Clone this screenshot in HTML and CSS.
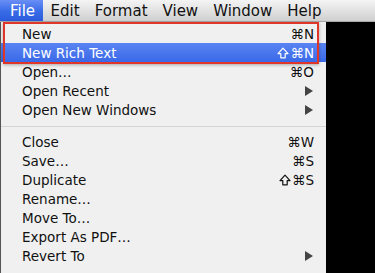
FILE: index.html
```html
<!DOCTYPE html>
<html lang="en">
<head>
    <meta charset="UTF-8">
    <title>File menu</title>
    <link rel="stylesheet" href="styles.css">
</head>
<body>
    <div class="menubar">
        <span class="menubar-item active">File</span>
        <span class="menubar-item">Edit</span>
        <span class="menubar-item">Format</span>
        <span class="menubar-item">View</span>
        <span class="menubar-item">Window</span>
        <span class="menubar-item">Help</span>
    </div>

    <div class="menu">
        <div class="menu-item"><span>New</span><span class="key">⌘N</span></div>
        <div class="menu-item selected">
            <span>New Rich Text</span>
            <span class="key"><svg class="shift" viewBox="0 0 12 12"><path d="M6 1.2 L11 6.6 H8.2 V10.8 H3.8 V6.6 H1 Z"/></svg>⌘N</span>
        </div>
        <div class="menu-item"><span>Open…</span><span class="key">⌘O</span></div>
        <div class="menu-item"><span>Open Recent</span><span class="arrow"></span></div>
        <div class="menu-item"><span>Open New Windows</span><span class="arrow"></span></div>
        <div class="separator"></div>
        <div class="menu-item"><span>Close</span><span class="key">⌘W</span></div>
        <div class="menu-item"><span>Save…</span><span class="key">⌘S</span></div>
        <div class="menu-item">
            <span>Duplicate</span>
            <span class="key"><svg class="shift" viewBox="0 0 12 12"><path d="M6 1.2 L11 6.6 H8.2 V10.8 H3.8 V6.6 H1 Z"/></svg>⌘S</span>
        </div>
        <div class="menu-item"><span>Rename…</span></div>
        <div class="menu-item"><span>Move To…</span></div>
        <div class="menu-item"><span>Export As PDF…</span></div>
        <div class="menu-item"><span>Revert To</span><span class="arrow"></span></div>

        <!-- annotation box around the two "New" items -->
        <div class="highlight-box"></div>
    </div>
</body>
</html>
```

FILE: styles.css
```css
body {
    margin: 0;
    background: #000;
    font-family: 'DejaVu Sans', sans-serif;
    overflow: hidden;
}

.menubar {
    height: 22px;
    display: flex;
    align-items: center;
    background: linear-gradient(#f4f4f4 0%, #e2e2e2 50%, #cfcfcf 100%);
    border-bottom: 1px solid #a8a8a8;
    box-sizing: border-box;
    font-size: 15px;
    color: #111;
}

.menubar-item {
    padding: 0 7.5px;
    height: 100%;
    display: flex;
    align-items: center;
}

.menubar-item:first-child {
    padding: 0 8px 0 10px;
}

.menubar-item.active {
    background: linear-gradient(#6a8ef5 0%, #3b6de8 50%, #2a5bdc 100%);
    color: #fff;
}

.menu {
    position: relative;
    width: 326px;
    background: #f0f0f0;
    border-left: 1px solid #555;
    border-bottom: 1px solid #bbb;
    box-sizing: border-box;
    padding: 2px 0 8px;
    font-size: 13.5px;
    color: #111;
}

.menu-item {
    height: 19px;
    display: flex;
    align-items: center;
    justify-content: space-between;
    padding: 0 12px 0 21px;
}

.menu-item.selected {
    background: linear-gradient(#5a84f2 0%, #3a69e8 100%);
    color: #fff;
}

.key {
    display: flex;
    align-items: center;
    font-size: 13.5px;
}

.shift {
    width: 12px;
    height: 12px;
    margin-right: 1px;
    fill: none;
    stroke: currentColor;
    stroke-width: 1.2;
    stroke-linejoin: round;
}

.arrow {
    width: 0;
    height: 0;
    border-top: 5px solid transparent;
    border-bottom: 5px solid transparent;
    border-left: 8px solid #444;
    margin-right: 1px;
}

.separator {
    height: 1px;
    background: #d4d4d4;
    margin: 7px 0 5px;
}

.highlight-box {
    position: absolute;
    left: 2px;
    top: 0;
    width: 316px;
    height: 42px;
    border: 2px solid #e0362a;
    box-sizing: border-box;
    box-shadow: 0 1px 3px rgba(0, 0, 0, 0.3);
}
```
